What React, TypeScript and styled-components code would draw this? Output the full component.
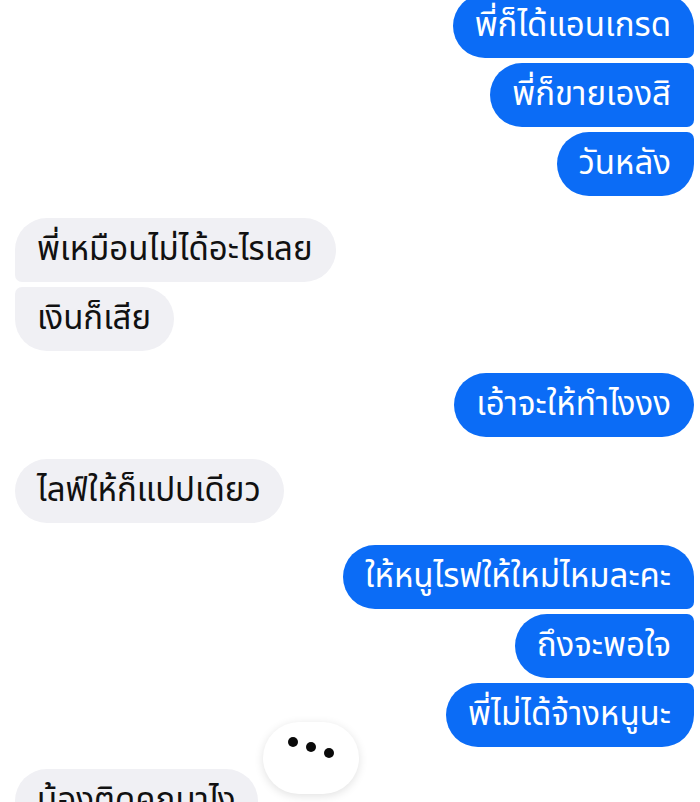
import React from "react";
import styled, { createGlobalStyle, css } from "styled-components";

const GlobalStyle = createGlobalStyle`
  html, body {
    margin: 0;
    padding: 0;
    background: #ffffff;
    overflow: hidden;
  }
  body {
    font-family: "Noto Sans Thai", "Noto Sans", "DejaVu Sans", sans-serif;
  }
`;

type Side = "me" | "them";
type Pos = "single" | "first" | "middle" | "last";

const groups: { side: Side; lines: string[] }[] = [
  { side: "me", lines: ["พี่ก็ได้แอนเกรด", "พี่ก็ขายเองสิ", "วันหลัง"] },
  { side: "them", lines: ["พี่เหมือนไม่ได้อะไรเลย", "เงินก็เสีย"] },
  { side: "me", lines: ["เอ้าจะให้ทำไงงง"] },
  { side: "them", lines: ["ไลฟ์ให้ก็แปปเดียว"] },
  { side: "me", lines: ["ให้หนูไรฟให้ใหม่ไหมละคะ", "ถึงจะพอใจ", "พี่ไม่ได้จ้างหนูนะ"] },
  { side: "them", lines: ["น้องติดคุกมาไง"] },
];

function radius(side: Side, pos: Pos) {
  const big = "32px";
  const small = "7px";
  const top = pos === "single" || pos === "first" ? big : small;
  const bottom = pos === "single" || pos === "last" ? big : small;
  // order: top-left, top-right, bottom-right, bottom-left
  return side === "me"
    ? `${big} ${top} ${bottom} ${big}`
    : `${top} ${big} ${big} ${bottom}`;
}

export default function App() {
  return (
    <>
      <GlobalStyle />
      <Screen>
        <Thread>
          {groups.map((g, gi) => (
            <Group key={gi} $side={g.side}>
              {g.lines.map((text, i) => {
                const n = g.lines.length;
                const pos: Pos =
                  n === 1 ? "single" : i === 0 ? "first" : i === n - 1 ? "last" : "middle";
                return (
                  <Bubble key={i} $side={g.side} $radius={radius(g.side, pos)}>
                    {text}
                  </Bubble>
                );
              })}
            </Group>
          ))}
        </Thread>
        <Typing>
          <Dot $y={0} />
          <Dot $y={5} />
          <Dot $y={11} />
        </Typing>
      </Screen>
    </>
  );
}

const Screen = styled.main`
  position: relative;
  width: 700px;
  height: 802px;
  overflow: hidden;
  background: #ffffff;
`;

const Thread = styled.div`
  display: flex;
  flex-direction: column;
  gap: 22px;
  padding: 0 6px 0 15px;
  margin-top: -6px;
`;

const Group = styled.div<{ $side: Side }>`
  display: flex;
  flex-direction: column;
  gap: 5px;
  align-items: ${(p) => (p.$side === "me" ? "flex-end" : "flex-start")};
`;

const Bubble = styled.div<{ $side: Side; $radius: string }>`
  box-sizing: border-box;
  height: 64px;
  display: flex;
  align-items: center;
  padding: 0 23px 0 22px;
  font-size: 33px;
  line-height: 1;
  white-space: nowrap;
  border-radius: ${(p) => p.$radius};
  ${(p) =>
    p.$side === "me"
      ? css`
          background: #0b6cf6;
          color: #ffffff;
        `
      : css`
          background: #f0f0f4;
          color: #111111;
        `}
`;

const Typing = styled.div`
  position: absolute;
  left: 263px;
  top: 722px;
  width: 96px;
  height: 72px;
  border-radius: 36px;
  background: #ffffff;
  box-shadow: 0 2px 10px rgba(0, 0, 0, 0.12);
  display: flex;
  justify-content: center;
  align-items: flex-start;
  gap: 8px;
  padding-top: 15px;
  box-sizing: border-box;
`;

const Dot = styled.span<{ $y: number }>`
  width: 10px;
  height: 10px;
  border-radius: 50%;
  background: #0a0a0a;
  margin-top: ${(p) => p.$y}px;
`;
